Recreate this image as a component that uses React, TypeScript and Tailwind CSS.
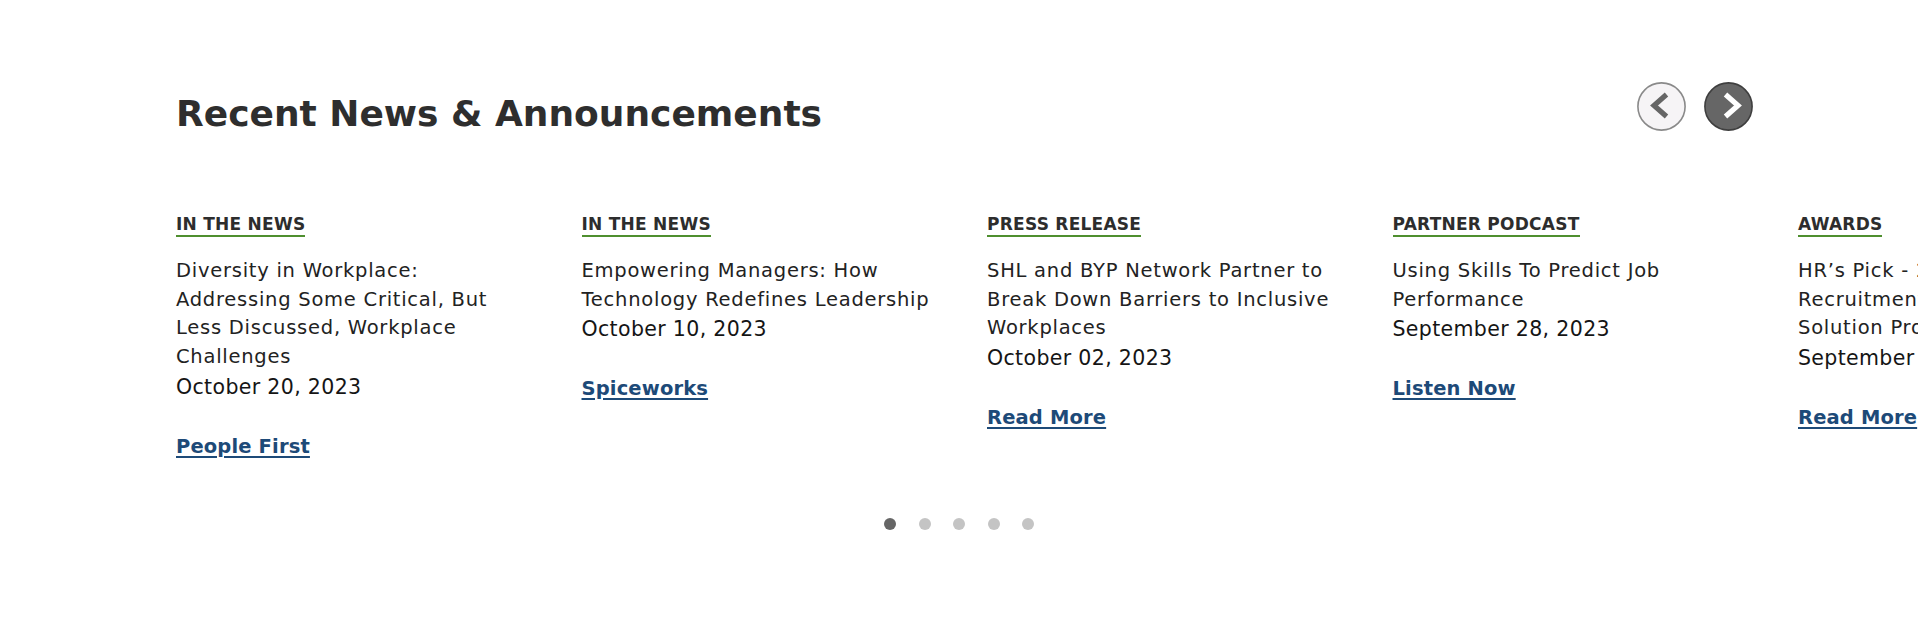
import React from "react";

type Item = { cat: string; lines: string[]; date: string; link: string };

const items: Item[] = [
  {
    cat: "IN THE NEWS",
    lines: ["Diversity in Workplace:", "Addressing Some Critical, But", "Less Discussed, Workplace", "Challenges"],
    date: "October 20, 2023",
    link: "People First",
  },
  {
    cat: "IN THE NEWS",
    lines: ["Empowering Managers: How", "Technology Redefines Leadership"],
    date: "October 10, 2023",
    link: "Spiceworks",
  },
  {
    cat: "PRESS RELEASE",
    lines: ["SHL and BYP Network Partner to", "Break Down Barriers to Inclusive", "Workplaces"],
    date: "October 02, 2023",
    link: "Read More",
  },
  {
    cat: "PARTNER PODCAST",
    lines: ["Using Skills To Predict Job", "Performance"],
    date: "September 28, 2023",
    link: "Listen Now",
  },
  {
    cat: "AWARDS",
    lines: ["HR’s Pick - 2023 Best", "Recruitment Assessment", "Solution Provider"],
    date: "September 14, 2023",
    link: "Read More",
  },
];

function PrevButton() {
  return (
    <button aria-label="Previous" className="block w-[49px] h-[49px] rounded-full">
      <svg width="49" height="49" viewBox="0 0 49 49">
        <circle cx="24.5" cy="24.5" r="23.6" fill="#f6f4f6" stroke="#8a8a8a" strokeWidth="1.6" />
        <path d="M29.5 12.5 L17 23.5 L29.5 34.5" fill="none" stroke="#666666" strokeWidth="5.2" strokeLinejoin="miter" />
      </svg>
    </button>
  );
}

function NextButton() {
  return (
    <button aria-label="Next" className="block w-[49px] h-[49px] rounded-full">
      <svg width="49" height="49" viewBox="0 0 49 49">
        <circle cx="24.5" cy="24.5" r="23.6" fill="#666666" stroke="#3f3f3f" strokeWidth="1.6" />
        <path d="M21.5 12.5 L34 23.5 L21.5 34.5" fill="none" stroke="#ffffff" strokeWidth="5.2" strokeLinejoin="miter" />
      </svg>
    </button>
  );
}

export default function App() {
  return (
    <div className="w-full h-[630px] bg-white overflow-hidden font-['DejaVu_Sans',sans-serif]">
      <div className="pt-[82px] pl-[176px] pr-[165px] flex justify-between items-start">
        <h2 className="mt-[10px] text-[36px] leading-[44px] font-bold text-[#2e2e2e]">
          Recent News &amp; Announcements
        </h2>
        <div className="flex gap-[18px]">
          <PrevButton />
          <NextButton />
        </div>
      </div>

      <div className="mt-[77px] pl-[176px] flex">
        {items.map((it, i) => (
          <div key={i} className="shrink-0 w-[405.5px] pr-[40px]">
            <span className="inline-block text-[17px] leading-[21px] tracking-[0.25px] font-bold text-[#2d2d2d] border-b-2 border-[#4f8f2f] whitespace-nowrap">
              {it.cat}
            </span>
            <div className="mt-[20px] text-[19.5px] leading-[28.7px] tracking-[0.75px] text-[#222222]">
              {it.lines.map((l, j) => (
                <div key={j} className="whitespace-nowrap">
                  {l}
                </div>
              ))}
            </div>
            <div className="text-[20.5px] leading-[31px] tracking-[0.35px] text-[#151515] whitespace-nowrap">
              {it.date}
            </div>
            <div className="mt-[29px] text-[19.5px] leading-[30px] tracking-[0.15px] font-bold whitespace-nowrap">
              <a
                href="#"
                className="text-[#1d4a78] underline decoration-[1.5px] underline-offset-[3px]"
              >
                {it.link}
              </a>
            </div>
          </div>
        ))}
      </div>

      <div className="mt-[56px] flex justify-center gap-[22.5px]">
        <span className="block w-[12px] h-[12px] rounded-full bg-[#666666]" />
        <span className="block w-[12px] h-[12px] rounded-full bg-[#c4c4c4]" />
        <span className="block w-[12px] h-[12px] rounded-full bg-[#c4c4c4]" />
        <span className="block w-[12px] h-[12px] rounded-full bg-[#c4c4c4]" />
        <span className="block w-[12px] h-[12px] rounded-full bg-[#c4c4c4]" />
      </div>
    </div>
  );
}
